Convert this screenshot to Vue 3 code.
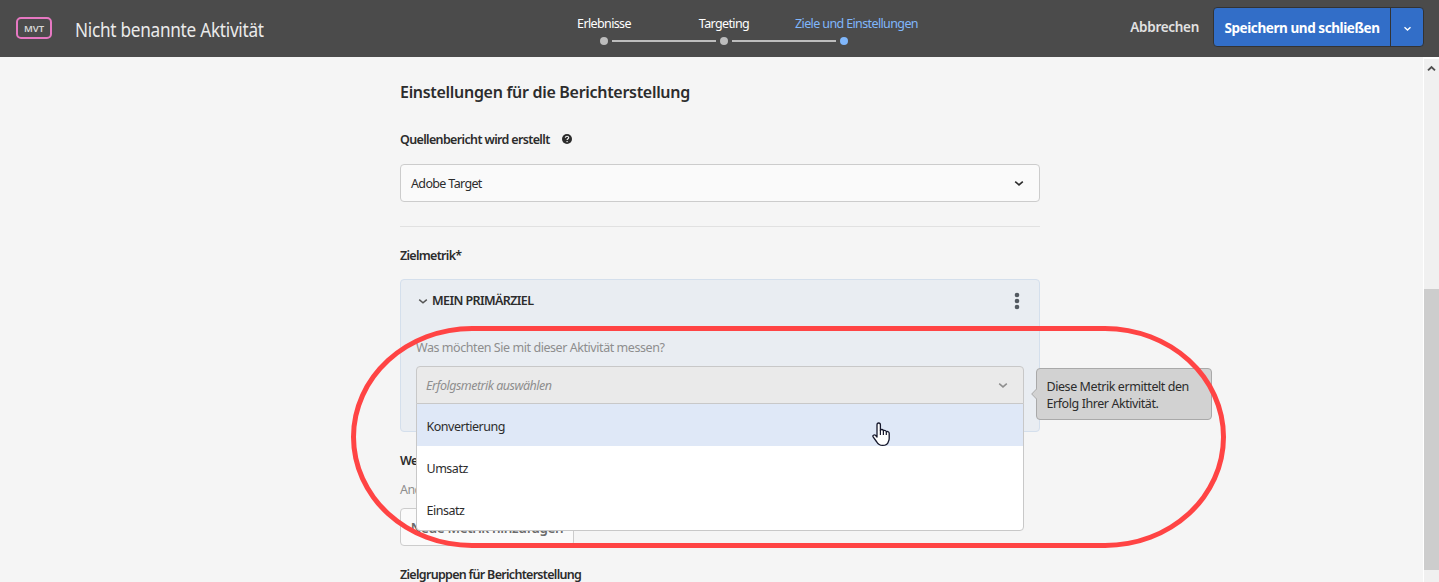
<script setup>
const steps = [
  { label: 'Erlebnisse', state: 'done' },
  { label: 'Targeting', state: 'done' },
  { label: 'Ziele und Einstellungen', state: 'active' },
]
const options = ['Konvertierung', 'Umsatz', 'Einsatz']
</script>

<template>
  <div class="page">
    <header class="bar">
      <span class="badge"><span class="badge-text">MVT</span></span>
      <span class="title"><span class="title-text">Nicht benannte Aktivität</span></span>
      <nav class="steps">
        <div v-for="s in steps" :key="s.label" class="step" :class="s.state">
          <span class="step-label">{{ s.label }}</span>
          <span class="track"><i class="line"></i><i class="dot"></i><i class="line"></i></span>
        </div>
      </nav>
      <div class="actions">
        <span class="cancel">Abbrechen</span>
        <div class="split">
          <button class="save">Speichern und schließen</button>
          <button class="more">
            <svg width="9" height="6" viewBox="0 0 9 6"><path d="M1.5 1.2 4.5 4 7.5 1.2" fill="none" stroke="#fff" stroke-width="1.4" /></svg>
          </button>
        </div>
      </div>
    </header>

    <div class="body">
      <main class="content">
        <h1 class="heading">Einstellungen für die Berichterstellung</h1>
        <div class="label source-label">
          <span class="t-source">Quellenbericht wird erstellt</span>
          <svg width="10" height="10" viewBox="0 0 10 10">
            <circle cx="5" cy="5" r="5" fill="#2c2c2c" />
            <path d="M3.4 3.8C3.4 1.7 6.7 1.8 6.7 3.7 6.7 4.8 5.1 4.7 5.1 6.1" fill="none" stroke="#f5f5f5" stroke-width="1.2" />
            <rect x="4.5" y="7" width="1.2" height="1.2" fill="#f5f5f5" />
          </svg>
        </div>
        <div class="select">
          <span class="t-target">Adobe Target</span>
          <svg width="10" height="7" viewBox="0 0 10 7"><path d="M1.2 1.6 5 4.9 8.8 1.6" fill="none" stroke="#2c2c2c" stroke-width="1.6" /></svg>
        </div>
        <hr class="rule" />
        <div class="label goal-label"><span class="t-goal">Zielmetrik*</span></div>

        <section class="card">
          <div class="card-head">
            <svg width="10" height="7" viewBox="0 0 10 7"><path d="M1.2 1.6 5 4.9 8.8 1.6" fill="none" stroke="#555" stroke-width="1.4" /></svg>
            <span class="card-title">MEIN PRIMÄRZIEL</span>
            <svg class="kebab" width="6" height="18" viewBox="0 0 6 18" fill="#535a61">
              <circle cx="3" cy="3" r="2.3" /><circle cx="3" cy="9" r="2.3" /><circle cx="3" cy="15" r="2.3" />
            </svg>
          </div>
          <div class="question"><span class="t-question">Was möchten Sie mit dieser Aktivität messen?</span></div>
          <div class="picker">
            <div class="picker-box">
              <span class="t-placeholder">Erfolgsmetrik auswählen</span>
              <svg width="10" height="7" viewBox="0 0 10 7"><path d="M1.2 1.6 5 4.9 8.8 1.6" fill="none" stroke="#8e8e8e" stroke-width="1.5" /></svg>
            </div>
            <ul class="menu">
              <li v-for="(o, i) in options" :key="o" :class="{ hover: i === 0 }"><span>{{ o }}</span></li>
            </ul>
            <div class="tip">
              <svg class="tip-arrow" width="6" height="12" viewBox="0 0 6 12"><path d="M6 .5 .7 6 6 11.5" fill="#d2d2d2" stroke="#a9a9a9" /></svg>
              <div>Diese Metrik ermittelt den</div>
              <div>Erfolg Ihrer Aktivität.</div>
            </div>
          </div>
        </section>

        <div class="label more-label"><span>We</span></div>
        <div class="hint"><span>And</span></div>
        <button class="add"><span class="t-add">Neue Metrik hinzufügen</span></button>
        <div class="label audience-label"><span class="t-audience">Zielgruppen für Berichterstellung</span></div>
      </main>

      <aside class="scroll">
        <svg class="up" width="9" height="7" viewBox="0 0 9 7"><path d="M1 5.4 4.5 2 8 5.4" fill="none" stroke="#505050" stroke-width="1.9" /></svg>
        <div class="thumb"></div>
      </aside>
    </div>

    <div class="ring"></div>
    <svg class="cursor" width="19" height="25" viewBox="0 0 19 25">
      <path d="M5 14V3Q5 1 6.7 1 8.4 1 8.4 3V8.2Q8.8 7.4 10 7.5 11.3 7.6 11.4 8.8 12.2 8.1 13.2 8.5 14.2 8.9 14.3 9.8 15.3 9.2 16.3 9.8 17.2 10.3 17.2 11.5V16.5Q17.2 18 16.3 19.8 15.5 23.4 10.5 23.4 6.8 23.4 4.8 20L1.3 15.2Q.4 13.8 1.4 13.2 2.4 12.5 3.5 13.3L5 15Z" fill="#fff" stroke="#15172b" stroke-width="1.3" stroke-linejoin="round" />
      <path d="M8.4 8V13M11.4 8.8V13M14.3 9.8V13" fill="none" stroke="#15172b" stroke-width="1.2" />
    </svg>
  </div>
</template>

<style>
body { margin: 0; overflow: hidden; }
</style>

<style scoped>
.page { position: relative; width: 1439px; height: 582px; overflow: hidden; background: #f5f5f5; font-family: "Noto Sans", "Open Sans", sans-serif; font-size: 12.5px; color: #2c2c2c; white-space: nowrap; display: flex; flex-direction: column; }
.page * { box-sizing: border-box; }
button { font-family: inherit; margin: 0; padding: 0; }
svg { display: block; flex: none; }
.bar { height: 57px; flex: none; background: #4b4b4b; display: grid; grid-template-columns: 75px 469px 360px 1fr; color: #fff; }
.badge { width: 36px; height: 22px; margin: 17px 0 0 16px; border: 2px solid #e678c2; border-radius: 5px; display: flex; align-items: center; justify-content: center; font-size: 9.5px; font-weight: 600; color: #d8d8d8; }
.badge-text { letter-spacing: -0.1px; }
.title { line-height: 60px; font-size: 19px; color: #eaeaea; font-weight: 400; }
.title-text { display: inline-block; letter-spacing: -0.3px; transform: scaleX(0.905); transform-origin: left; }
.steps { display: flex; }
.step { width: 120px; display: flex; flex-direction: column; align-items: center; padding-top: 15px; }
.step-label { line-height: 18px; font-size: 12.5px; letter-spacing: -0.62px; }
.track { display: flex; align-items: center; width: 120px; margin-top: 4px; }
.line { flex: 1; height: 2px; background: #bdbdbd; }
.dot { width: 8px; height: 8px; border-radius: 50%; background: #bdbdbd; margin: 0 4px; }
.step:first-child .line:first-child, .step:last-child .line:last-child { visibility: hidden; }
.active { color: #80b7fb; }
.active .step-label { margin-right: -25px; }
.active .dot { background: #80b7fb; }
.actions { display: flex; justify-content: flex-end; padding: 7px 15px 0 0; }
.cancel { font-size: 13.5px; font-weight: 600; line-height: 40px; margin-right: 14px; color: #e2e2e2; letter-spacing: -0.3px; }
.split { display: flex; width: 211px; height: 40px; border: 1px solid #333; border-radius: 4px; background: #326ec8; }
.save { width: 177px; border: 0; border-right: 1px solid #333; background: none; color: #fff; font-size: 13.5px; font-weight: 700; letter-spacing: -0.42px; padding-top: 2px; }
.more { flex: 1; border: 0; background: none; display: flex; align-items: center; justify-content: center; padding-top: 3px; }
.body { flex: 1; display: flex; justify-content: space-between; }
.content { width: 640px; height: 525px; margin-left: 400px; }
.heading { margin: 0; padding-top: 23px; height: 70px; font-size: 16px; font-weight: 600; line-height: 24px; letter-spacing: -0.3px; }
.label { font-weight: 650; line-height: 20px; display: flex; align-items: center; letter-spacing: -0.65px; }
.source-label { height: 25px; gap: 12px; }
.source-label svg { margin-bottom: 1px; }
.select { margin-top: 12px; height: 38px; border: 1px solid #ccc; border-radius: 4px; background: #fafafa; display: flex; align-items: center; justify-content: space-between; padding: 0 15px 0 10px; }
.rule { margin: 24px 0 0; border: 0; height: 1px; background: #e1e1e1; }
.goal-label { height: 20px; margin-top: 19px; }
.card { margin-top: 13px; height: 153px; border: 1px solid #d4dfec; border-radius: 4px; background: #e9edf2; padding: 0 15px; }
.card-head { height: 42px; display: flex; align-items: center; padding-left: 2px; }
.card-title { font-weight: 650; margin: 0 0 2px 4px; letter-spacing: -0.6px; }
.kebab { margin-left: auto; margin-right: 4px; }
.question { margin-top: 16px; height: 20px; line-height: 20px; color: #8e8e8e; }
.picker { position: relative; margin-top: 8px; width: 608px; height: 38px; }
.picker-box { height: 38px; border: 1px solid #c8c8c8; border-radius: 4px 4px 0 0; background: #eaeaea; display: flex; align-items: center; justify-content: space-between; padding: 0 15px 0 9px; color: #8e8e8e; font-style: italic; }
.menu { position: absolute; z-index: 2; left: 0; top: 37px; width: 608px; height: 128px; margin: 0; padding: 0; list-style: none; border: 1px solid #c8c8c8; border-radius: 0 0 4px 4px; background: #fff; overflow: hidden; }
.menu li { height: 42px; line-height: 46px; padding-left: 9.5px; }
.menu .hover { background: #dfe8f7; }
.tip { position: absolute; left: 620px; top: 2px; width: 176px; height: 52px; border: 1px solid #a9a9a9; border-radius: 4px; background: #d2d2d2; padding: 9px 0 0 9.5px; line-height: 17px; }
.tip-arrow { position: absolute; left: -6px; top: 19px; }
.more-label { height: 20px; margin-top: 19px; }
.hint { height: 20px; line-height: 20px; margin-top: 9px; color: #8e8e8e; }
.add { display: block; width: 174px; height: 38px; margin-top: 8px; border: 1px solid #ccc; border-radius: 4px; background: #fafafa; color: #6b6b6b; font-size: 13.5px; font-weight: 600; padding-top: 2px; }
.audience-label { height: 20px; margin-top: 19px; }
.t-target { letter-spacing: -0.65px; }
.t-question { letter-spacing: -0.44px; }
.menu span { letter-spacing: -0.48px; }
.tip div { letter-spacing: -0.43px; }
.hint span { letter-spacing: -0.6px; }
.t-goal { letter-spacing: -0.7px; }
.t-audience { letter-spacing: -0.7px; }
.t-placeholder { letter-spacing: -0.5px; }
.t-add { letter-spacing: -0.35px; }
.scroll { width: 16px; border-left: 1px solid #fff; border-top: 2px solid #fff; background: #f0f0f0; }
.up { margin: 6px 0 0 3px; }
.thumb { height: 281px; margin-top: 217px; background: #cdcdcd; }
.ring { position: absolute; z-index: 5; left: 351px; top: 326px; width: 875px; height: 222px; border: 5px solid #ff4444; border-radius: 121px / 111px; }
.cursor { position: absolute; z-index: 6; left: 872px; top: 422px; }
</style>
